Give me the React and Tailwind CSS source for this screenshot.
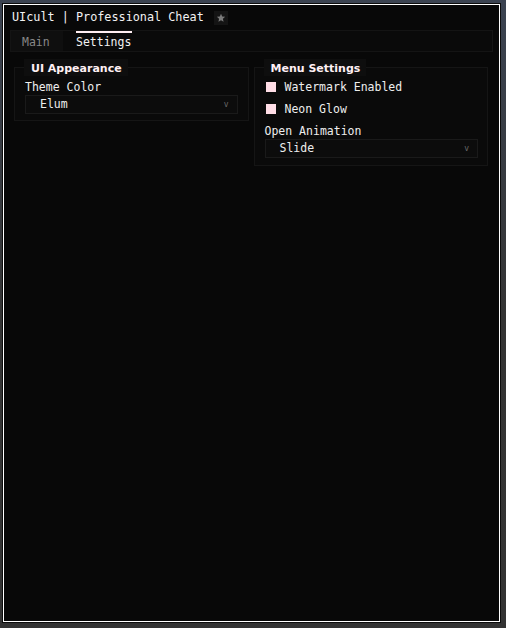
import React from 'react';

const mono = { fontFamily: '"DejaVu Sans Mono", "Liberation Mono", monospace' };

const Dropdown = ({ value }) => (
  <div className="mt-[1px] flex items-center justify-between h-[19px] bg-[#0c0c0c] border border-[#1a1a1a] pl-[14px] pr-[8px] pt-[2px]">
    <span className="text-[11.5px] text-[#eeeeee] leading-none">{value}</span>
    <span className="text-[8px] text-[#6a6a6a] leading-none">v</span>
  </div>
);

const Panel = ({ title, children, className }) => (
  <div className={`relative flex-1 bg-[#0a0a0a] border border-[#151515] ${className}`}>
    <div
      className="absolute -top-[9px] left-[9px] h-[17px] pl-[7px] pr-[6px] pt-[1px] flex items-center bg-[#0e0e0e] text-[11px] font-bold text-[#fff0f4] leading-none"
      style={{ fontFamily: '"DejaVu Sans", "Liberation Sans", sans-serif' }}
    >
      {title}
    </div>
    {children}
  </div>
);

const Checkbox = ({ label }) => (
  <div className="flex items-center gap-[9px] h-[12px]">
    <div className="w-[10px] h-[10px] -mt-[3px] bg-[#ffdde6]" />
    <span className="text-[11.5px] text-[#eeeeee] leading-none">{label}</span>
  </div>
);

export default function App() {
  return (
    <div className="w-[506px] h-[628px] bg-gradient-to-b from-[#3b4351] via-[#343434] to-[#333333] pt-[4px] pl-[3px]" style={mono}>
      <div className="w-[497px] h-[618px] border border-white bg-[#080808] shadow-[0_0_0_1px_#0c0c0c] flex flex-col">
        {/* title bar */}
        <div className="flex items-center h-[22px] pl-[8px] pt-[4px]">
          <span className="text-[11.8px] text-[#f2f2f2] leading-none">UIcult | Professional Cheat</span>
          <span className="ml-[10px] w-[14px] h-[14px] bg-[#141414] flex items-center justify-center">
            <svg width="10" height="10" viewBox="0 0 24 24" fill="#7a7a7a">
              <path d="M12 2l2.9 6.6 7.1.6-5.4 4.7 1.6 7-6.2-3.7-6.2 3.7 1.6-7L2 9.2l7.1-.6z" />
            </svg>
          </span>
        </div>
        {/* tabs */}
        <div className="mx-[6px] mt-[3px] h-[22px] flex bg-[#0a0a0a] border border-[#141414]">
          <div className="w-[52px] bg-[#0f0f0f] flex items-center pl-[11px] pt-[4px] text-[11.5px] text-[#888888] leading-none">Main</div>
          <div className="ml-[13px] flex flex-col">
            <div className="h-[2px] w-[56px] bg-[#ffeef2]" />
            <div className="flex-1 flex items-center pt-[2px] text-[11.5px] text-[#f2f2f2] leading-none">Settings</div>
          </div>
        </div>
        {/* panels */}
        <div className="flex items-start gap-[5px] pl-[10px] pr-[11px] mt-[15px]">
          <Panel title="UI Appearance" className="h-[54px] pl-[10px] pr-[10px] pt-[14px]">
            <div className="text-[11.5px] text-[#eeeeee] leading-none">Theme Color</div>
            <Dropdown value="Elum" />
          </Panel>
          <Panel title="Menu Settings" className="h-[99px] pl-[11px] pr-[9px] pt-[14px]">
            <div className="flex flex-col gap-[10px]">
              <Checkbox label="Watermark Enabled" />
              <Checkbox label="Neon Glow" />
            </div>
            <div className="text-[11.5px] text-[#eeeeee] leading-none mt-[10px] -ml-[1px]">Open Animation</div>
            <div className="-ml-[1px]">
              <Dropdown value="Slide" />
            </div>
          </Panel>
        </div>
      </div>
    </div>
  );
}
